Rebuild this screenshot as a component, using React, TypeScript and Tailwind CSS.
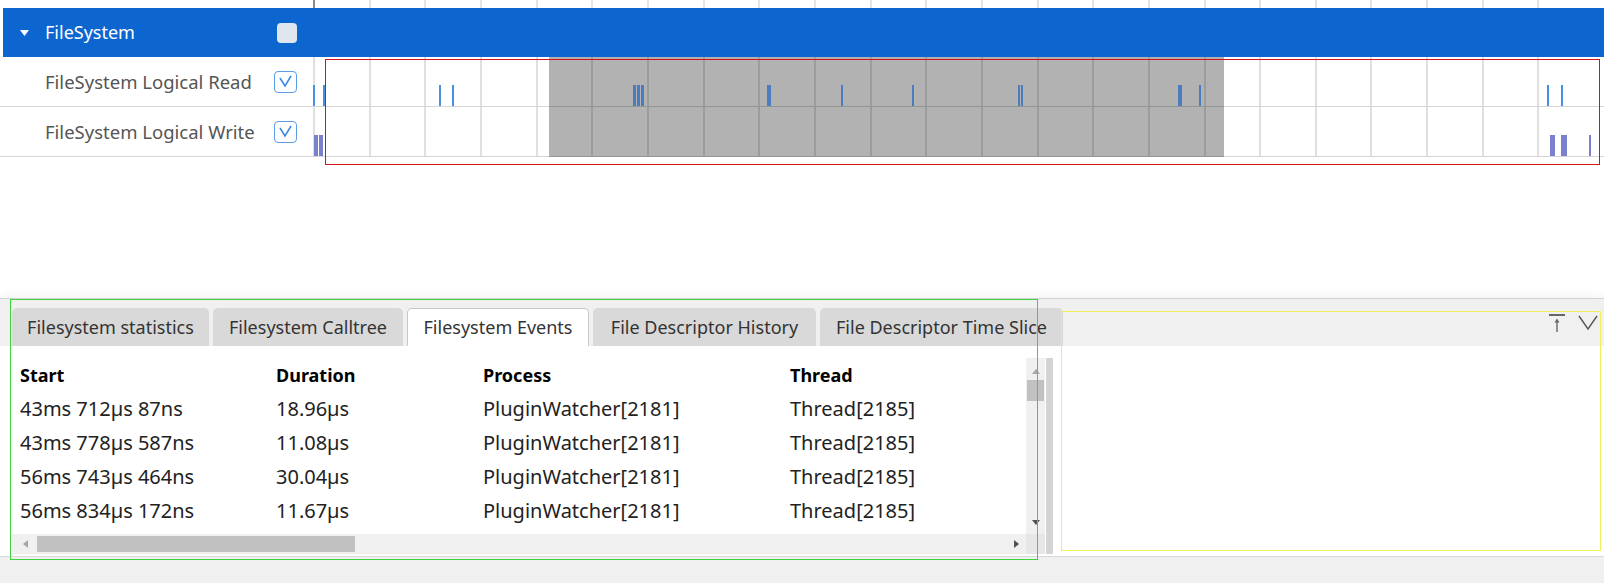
import React from 'react';

type Bar = { left: number; width: number };

const GRID_COLS = Array.from({ length: 23 }, (_, i) => i);

// selection window on the timeline, in px from the timeline start
const SEL_LEFT = 236;
const SEL_RIGHT = 911;

const readBars: Bar[] = [
  { left: 0, width: 2 },
  { left: 10, width: 2 },
  { left: 126, width: 2 },
  { left: 139, width: 2 },
  { left: 320, width: 3 },
  { left: 324, width: 3 },
  { left: 328, width: 3 },
  { left: 454, width: 4 },
  { left: 528, width: 2 },
  { left: 599, width: 2 },
  { left: 705, width: 2 },
  { left: 708, width: 2 },
  { left: 865, width: 4 },
  { left: 886, width: 2 },
  { left: 1234, width: 2 },
  { left: 1248, width: 2 },
];

const writeBars: Bar[] = [
  { left: 1, width: 4 },
  { left: 6, width: 4 },
  { left: 1237, width: 5 },
  { left: 1248, width: 6 },
  { left: 1276, width: 2 },
];

const events = [
  { start: '43ms 712µs 87ns', duration: '18.96µs', process: 'PluginWatcher[2181]', thread: 'Thread[2185]' },
  { start: '43ms 778µs 587ns', duration: '11.08µs', process: 'PluginWatcher[2181]', thread: 'Thread[2185]' },
  { start: '56ms 743µs 464ns', duration: '30.04µs', process: 'PluginWatcher[2181]', thread: 'Thread[2185]' },
  { start: '56ms 834µs 172ns', duration: '11.67µs', process: 'PluginWatcher[2181]', thread: 'Thread[2185]' },
];

const tabs = [
  { label: 'Filesystem statistics', width: 'w-[197px]', active: false },
  { label: 'Filesystem Calltree', width: 'w-[190px]', active: false },
  { label: 'Filesystem Events', width: 'w-[182px]', active: true },
  { label: 'File Descriptor History', width: 'w-[223px]', active: false },
  { label: 'File Descriptor Time Slice', width: 'w-[243px]', active: false },
];

function CheckBox() {
  return (
    <div className="w-[23px] h-[22px] rounded-[4px] border border-[#5b9de6] bg-white flex items-center justify-center">
      <svg width="15" height="13" viewBox="0 0 15 13">
        <polyline points="2,3 7,11 13,1" fill="none" stroke="#3d8be0" strokeWidth="1.6" />
      </svg>
    </div>
  );
}

function Timeline({ bars, kind }: { bars: Bar[]; kind: 'read' | 'write' }) {
  return (
    <div className="relative flex w-[1280px] h-full">
      {GRID_COLS.map((i) => (
        <div key={i} className="flex-1 border-l-2 border-[#e0e0e0]" />
      ))}
      <div className="absolute top-0 -bottom-px left-[236px] w-[675px] bg-black/30" />
      {bars.map((b, i) => {
        const inSel = b.left >= SEL_LEFT && b.left <= SEL_RIGHT;
        const color =
          kind === 'write' ? 'bg-[#7a80cc]' : inSel ? 'bg-[#4b7cbf]' : 'bg-[#4a90e2]';
        return (
          <div
            key={i}
            className={`absolute top-[28px] bottom-0 ${color}`}
            style={{ left: b.left, width: b.width }}
          />
        );
      })}
    </div>
  );
}

function TrackRow({ label, bars, kind }: { label: string; bars: Bar[]; kind: 'read' | 'write' }) {
  return (
    <div className="flex h-[50px] border-b border-[#d6d6d6]">
      <div className="w-[313px] flex items-center pl-[45px] pr-[16px]">
        <span className="text-[18.5px] text-[#555]">{label}</span>
        <div className="ml-auto">
          <CheckBox />
        </div>
      </div>
      <Timeline bars={bars} kind={kind} />
      <div className="flex-1" />
    </div>
  );
}

function Arrow({ dir, color }: { dir: 'up' | 'down' | 'left' | 'right'; color: string }) {
  const pts = {
    up: '0,5 4,0 8,5',
    down: '0,0 8,0 4,5',
    left: '5,0 5,8 0,4',
    right: '0,0 0,8 5,4',
  }[dir];
  const size = dir === 'up' || dir === 'down' ? { w: 8, h: 5 } : { w: 5, h: 8 };
  return (
    <svg width={size.w} height={size.h} viewBox={`0 0 ${size.w} ${size.h}`}>
      <polygon points={pts} fill={color} />
    </svg>
  );
}

export default function App() {
  return (
    <div className="relative w-[1604px] h-[583px] overflow-hidden bg-white flex flex-col font-['Noto_Sans',sans-serif]">
      {/* time ruler ticks */}
      <div className="flex h-[8px]">
        <div className="w-[313px]" />
        <div className="flex w-[1280px]">
          {GRID_COLS.map((i) => (
            <div
              key={i}
              className={i === 0 ? 'flex-1 border-l-2 border-[#8a8a8a]' : 'flex-1 border-l-2 border-[#e4e4e4]'}
            />
          ))}
        </div>
        <div className="flex-1" />
      </div>

      {/* group header */}
      <div className="ml-[3px] flex h-[49px] bg-[#0d66d0]">
        <div className="w-[310px] flex items-center pl-[17px] pr-[16px]">
          <svg width="9" height="6" viewBox="0 0 9 6">
            <polygon points="0,0 9,0 4.5,6" fill="#fff" />
          </svg>
          <span className="ml-[16px] text-[18px] text-white">FileSystem</span>
          <div className="ml-auto w-[20px] h-[20px] rounded-[4px] bg-[#dfe6f0]" />
        </div>
      </div>

      <TrackRow label="FileSystem Logical Read" bars={readBars} kind="read" />
      <TrackRow label="FileSystem Logical Write" bars={writeBars} kind="write" />

      <div className="flex-1" />

      {/* bottom panel */}
      <div className="h-[285px] flex flex-col border-t border-[#d3d3d3] shadow-[0_-4px_8px_rgba(0,0,0,0.04)]">
        <div className="flex h-[47px] bg-[#f0f0f0] items-end pl-[12px] gap-[4px]">
          {tabs.map((t) => (
            <div
              key={t.label}
              className={
                t.active
                  ? `${t.width} h-[38px] flex items-center justify-center rounded-t-[5px] bg-white border border-b-0 border-[#c8c8c8] text-[18px] text-[#333]`
                  : `${t.width} h-[38px] flex items-center justify-center rounded-t-[5px] bg-[#d9d9d9] text-[18px] text-[#333]`
              }
            >
              {t.label}
            </div>
          ))}
          <div className="ml-auto self-start mt-[15px] mr-[6px] flex items-start gap-[13px]">
            <svg width="16" height="18" viewBox="0 0 16 18">
              <line x1="0" y1="1" x2="16" y2="1" stroke="#666" strokeWidth="2" />
              <line x1="8" y1="6" x2="8" y2="18" stroke="#666" strokeWidth="1.4" />
              <polygon points="8,4.5 5.5,8.5 10.5,8.5" fill="#666" />
            </svg>
            <svg width="20" height="16" viewBox="0 0 20 16">
              <polyline points="1,2 10,15 19,2" fill="none" stroke="#555" strokeWidth="1.4" />
            </svg>
          </div>
        </div>

        <div className="flex h-[210px] bg-white">
          <div className="w-[1026px] flex flex-col">
            <div className="mt-[12px] flex flex-col">
              <div className="grid grid-cols-[256px_207px_307px_1fr] pl-[20px] h-[34px] items-center text-[18px] font-bold text-black">
                <span>Start</span>
                <span>Duration</span>
                <span>Process</span>
                <span>Thread</span>
              </div>
              {events.map((e, i) => (
                <div
                  key={i}
                  className="grid grid-cols-[256px_207px_307px_1fr] pl-[20px] h-[34px] items-center text-[20px] text-[#222]"
                >
                  <span>{e.start}</span>
                  <span>{e.duration}</span>
                  <span>{e.process}</span>
                  <span>{e.thread}</span>
                </div>
              ))}
            </div>
            <div className="flex-1" />
            <div className="ml-[12px] h-[20px] bg-[#f0f0f0] flex items-center">
              <div className="w-[25px] flex justify-center pl-[2px]">
                <Arrow dir="left" color="#a6a6a6" />
              </div>
              <div className="w-[318px] h-[16px] bg-[#c1c1c1]" />
              <div className="flex-1" />
              <div className="w-[20px] flex justify-center">
                <Arrow dir="right" color="#505050" />
              </div>
            </div>
            <div className="h-[2px]" />
          </div>

          <div className="w-[19px] mt-[12px] mb-[2px] flex flex-col bg-[#f0f0f0]">
            <div className="h-[22px] flex items-center justify-center pt-[4px]">
              <Arrow dir="up" color="#a6a6a6" />
            </div>
            <div className="mx-auto w-[17px] h-[21px] bg-[#c1c1c1]" />
            <div className="flex-1" />
            <div className="h-[18px] flex items-center justify-center">
              <Arrow dir="down" color="#505050" />
            </div>
            <div className="h-[3px]" />
            <div className="h-[20px] bg-[#e6e6e6]" />
          </div>
          <div className="ml-[1px] w-[7px] mt-[12px] mb-[2px] bg-[#d4d4d4]" />

          <div className="flex-1" />
        </div>

        <div className="flex-1 bg-[#f0f0f0] border-t border-[#d9d9d9]" />
      </div>

      {/* highlight outlines */}
      <div className="absolute left-[325px] top-[59px] w-[1275px] h-[106px] border border-[#d0131c]" />
      <div className="absolute left-[10px] top-[299px] w-[1028px] h-[261px] border border-[#3cd43c]" />
      <div className="absolute left-[1061px] top-[311px] w-[540px] h-[240px] border border-[#f0f05a]" />
    </div>
  );
}
